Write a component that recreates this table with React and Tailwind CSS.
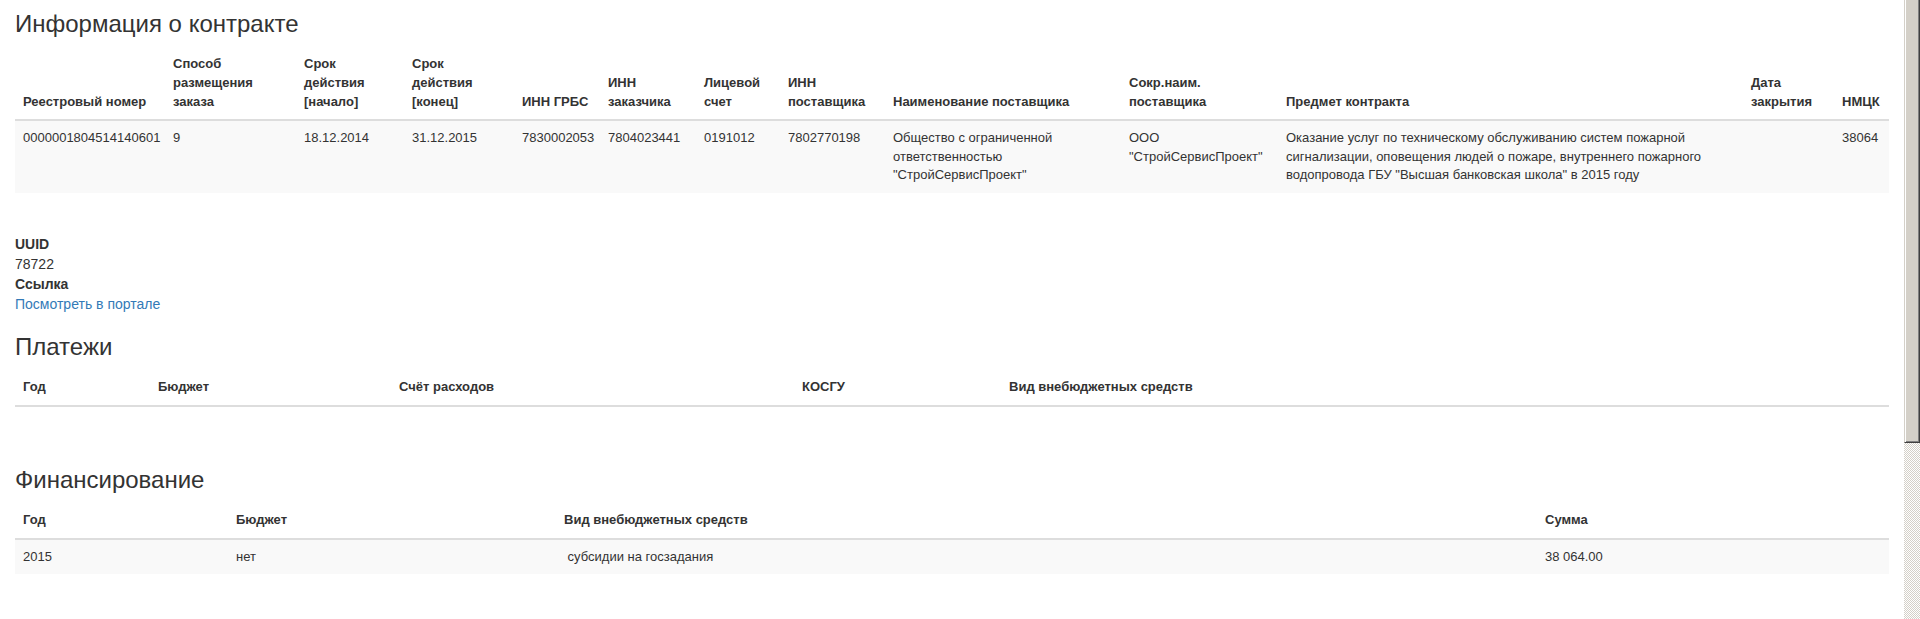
import React from 'react';

const contractCols = [
  { w: 'w-[150px]', label: 'Реестровый номер' },
  { w: 'w-[131px]', label: 'Способ размещения заказа' },
  { w: 'w-[108px]', label: 'Срок действия [начало]' },
  { w: 'w-[110px]', label: 'Срок действия [конец]' },
  { w: 'w-[86px]', label: 'ИНН ГРБС' },
  { w: 'w-[96px]', label: 'ИНН заказчика' },
  { w: 'w-[84px]', label: 'Лицевой счет' },
  { w: 'w-[105px]', label: 'ИНН поставщика' },
  { w: 'w-[236px]', label: 'Наименование поставщика' },
  { w: 'w-[157px]', label: 'Сокр.наим. поставщика' },
  { w: 'w-[465px]', label: 'Предмет контракта' },
  { w: 'w-[91px]', label: 'Дата закрытия' },
  { w: 'w-[55px]', label: 'НМЦК' },
];

const contractRow = [
  '0000001804514140601',
  '9',
  '18.12.2014',
  '31.12.2015',
  '7830002053',
  '7804023441',
  '0191012',
  '7802770198',
  'Общество с ограниченной ответственностью "СтройСервисПроект"',
  'ООО "СтройСервисПроект"',
  'Оказание услуг по техническому обслуживанию систем пожарной сигнализации, оповещения людей о пожаре, внутреннего пожарного водопровода ГБУ "Высшая банковская школа" в 2015 году',
  '',
  '38064',
];

const paymentCols = [
  { w: 'w-[135px]', label: 'Год' },
  { w: 'w-[241px]', label: 'Бюджет' },
  { w: 'w-[403px]', label: 'Счёт расходов' },
  { w: 'w-[207px]', label: 'КОСГУ' },
  { w: 'w-[888px]', label: 'Вид внебюджетных средств' },
];

const fundingCols = [
  { w: 'w-[213px]', label: 'Год' },
  { w: 'w-[328px]', label: 'Бюджет' },
  { w: 'w-[981px]', label: 'Вид внебюджетных средств' },
  { w: 'w-[352px]', label: 'Сумма' },
];

const fundingRow = ['2015', 'нет', '\u00a0субсидии на госзадания', '38 064.00'];

const Th = ({ children }) => (
  <th className="p-2 text-left align-bottom font-bold border-b-2 border-[#dddddd]">{children}</th>
);

const Td = ({ children }) => <td className="p-2 align-top">{children}</td>;

const DataTable = ({ cols, row }) => (
  <table className="w-full table-fixed border-collapse text-[13px] leading-[1.42857]">
    <colgroup>
      {cols.map((c, i) => (
        <col key={i} className={c.w} />
      ))}
    </colgroup>
    <thead>
      <tr>
        {cols.map((c, i) => (
          <Th key={i}>{c.label}</Th>
        ))}
      </tr>
    </thead>
    <tbody>
      {row && (
        <tr className="bg-[#f9f9f9]">
          {row.map((v, i) => (
            <Td key={i}>{v}</Td>
          ))}
        </tr>
      )}
    </tbody>
  </table>
);

const Heading = ({ children, className }) => (
  <h3 className={`text-[24px] leading-[1.1] font-normal mb-[10px] ${className}`}>{children}</h3>
);

export default function App() {
  return (
    <div className="flex h-[619px] overflow-hidden bg-white text-[#333333] font-['Liberation_Sans',Arial,sans-serif]">
      <div className="flex-1 px-[15px]">
        <Heading className="mt-[11px]">Информация о контракте</Heading>
        <DataTable cols={contractCols} row={contractRow} />

        <dl className="mt-[41px] text-[14px] leading-[20px]">
          <dt className="font-bold">UUID</dt>
          <dd>78722</dd>
          <dt className="font-bold">Ссылка</dt>
          <dd>
            <a href="#" className="text-[#337ab7]">Посмотреть в портале</a>
          </dd>
        </dl>

        <Heading className="mt-[20px]">Платежи</Heading>
        <DataTable cols={paymentCols} />

        <Heading className="mt-[60px]">Финансирование</Heading>
        <DataTable cols={fundingCols} row={fundingRow} />
      </div>

      {/* classic windows scrollbar */}
      <div className="w-[16px] flex flex-col">
        <div className="h-[443px] bg-[#d4d0c8] border-l border-[#d4d0c8] border-r border-r-[#404040] border-b border-b-[#404040] shadow-[inset_1px_0_0_#ffffff,inset_-1px_-1px_0_#808080]" />
        <div className="flex-1 bg-[repeating-conic-gradient(#d4d0c8_0_25%,#ffffff_0_50%)] bg-[length:2px_2px]" />
      </div>
    </div>
  );
}
